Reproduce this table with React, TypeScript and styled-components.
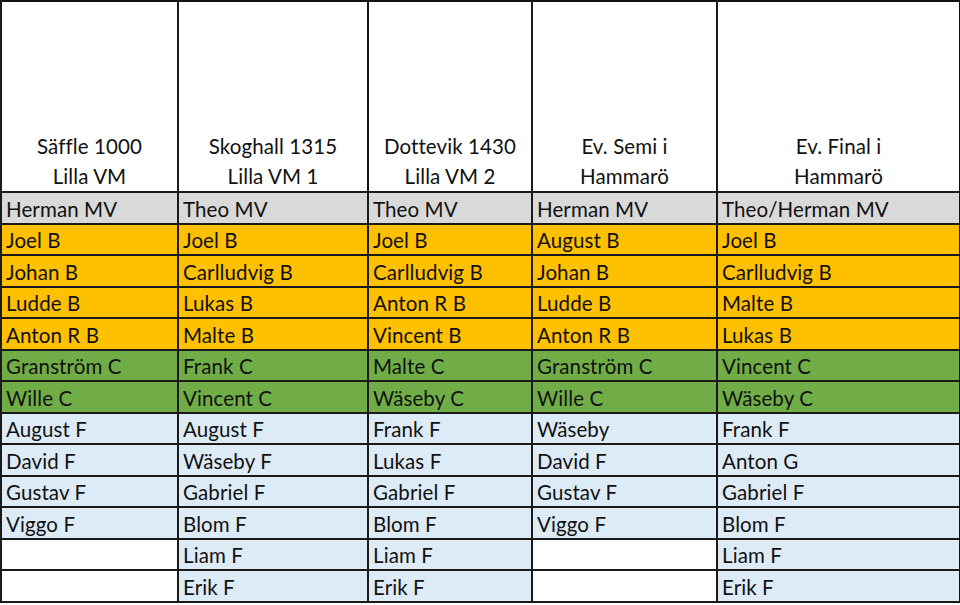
import * as React from "react";
import styled, { createGlobalStyle } from "styled-components";

const GlobalStyle = createGlobalStyle`
  html, body {
    margin: 0;
    padding: 0;
    background: #ffffff;
  }
  body {
    font-family: Lato, "Open Sans", sans-serif;
    color: #111;
  }
`;

type Band = "keeper" | "back" | "centre" | "forward";

const bandColors: Record<Band, string> = {
  keeper: "#d9d9d9",
  back: "#ffc000",
  centre: "#70ad47",
  forward: "#ddebf7",
};

const bands: Band[] = [
  "keeper",
  "back",
  "back",
  "back",
  "back",
  "centre",
  "centre",
  "forward",
  "forward",
  "forward",
  "forward",
  "forward",
  "forward",
];

const columns = [
  {
    title: ["Säffle 1000", "Lilla VM"],
    width: 177,
    players: ["Herman MV", "Joel B", "Johan B", "Ludde B", "Anton R B", "Granström C", "Wille C", "August F", "David F", "Gustav F", "Viggo F", "", ""],
  },
  {
    title: ["Skoghall 1315", "Lilla VM 1"],
    width: 190,
    players: ["Theo MV", "Joel B", "Carlludvig B", "Lukas B", "Malte B", "Frank C", "Vincent C", "August F", "Wäseby F", "Gabriel F", "Blom F", "Liam F", "Erik F"],
  },
  {
    title: ["Dottevik 1430", "Lilla VM 2"],
    width: 164,
    players: ["Theo MV", "Joel B", "Carlludvig B", "Anton R B", "Vincent B", "Malte C", "Wäseby C", "Frank F", "Lukas F", "Gabriel F", "Blom F", "Liam F", "Erik F"],
  },
  {
    title: ["Ev. Semi i", "Hammarö"],
    width: 185,
    players: ["Herman MV", "August B", "Johan B", "Ludde B", "Anton R B", "Granström C", "Wille C", "Wäseby", "David F", "Gustav F", "Viggo F", "", ""],
  },
  {
    title: ["Ev. Final i", "Hammarö"],
    width: 244,
    players: ["Theo/Herman MV", "Joel B", "Carlludvig B", "Malte B", "Lukas B", "Vincent C", "Wäseby C", "Frank F", "Anton G", "Gabriel F", "Blom F", "Liam F", "Erik F"],
  },
];

const Sheet = styled.table`
  width: 960px;
  border-collapse: collapse;
  table-layout: fixed;
  border-top: 2px solid #111;
  border-left: 2px solid #111;
  border-right: 4px solid #111;
  border-bottom: 2px solid #111;
`;

const HeadRow = styled.tr`
  height: 191px;
`;

const HeadCell = styled.th`
  padding: 0 4px 0;
  border: 2px solid #1a1a1a;
  border-top: 0;
  vertical-align: bottom;
  text-align: center;
  font-weight: 400;
  font-size: 20.5px;
  line-height: 30px;
  letter-spacing: 0.1px;
`;

const Row = styled.tr`
  height: 31.5px;
`;

const Cell = styled.td<{ $band: Band; $empty: boolean }>`
  padding: 0 4px;
  border: 2px solid #1a1a1a;
  background: ${(p) => (p.$empty ? "#ffffff" : bandColors[p.$band])};
  font-size: 20.5px;
  line-height: 27px;
  vertical-align: bottom;
  white-space: nowrap;
  overflow: hidden;
  letter-spacing: 0.1px;
`;

export default function App() {
  return (
    <>
      <GlobalStyle />
      <Sheet>
        <colgroup>
          {columns.map((c, i) => (
            <col key={i} style={{ width: c.width }} />
          ))}
        </colgroup>
        <thead>
          <HeadRow>
            {columns.map((c, i) => (
              <HeadCell key={i}>
                {c.title[0]}
                <br />
                {c.title[1]}
              </HeadCell>
            ))}
          </HeadRow>
        </thead>
        <tbody>
          {bands.map((band, r) => (
            <Row key={r}>
              {columns.map((c, i) => (
                <Cell key={i} $band={band} $empty={c.players[r] === ""}>
                  {c.players[r]}
                </Cell>
              ))}
            </Row>
          ))}
        </tbody>
      </Sheet>
    </>
  );
}
